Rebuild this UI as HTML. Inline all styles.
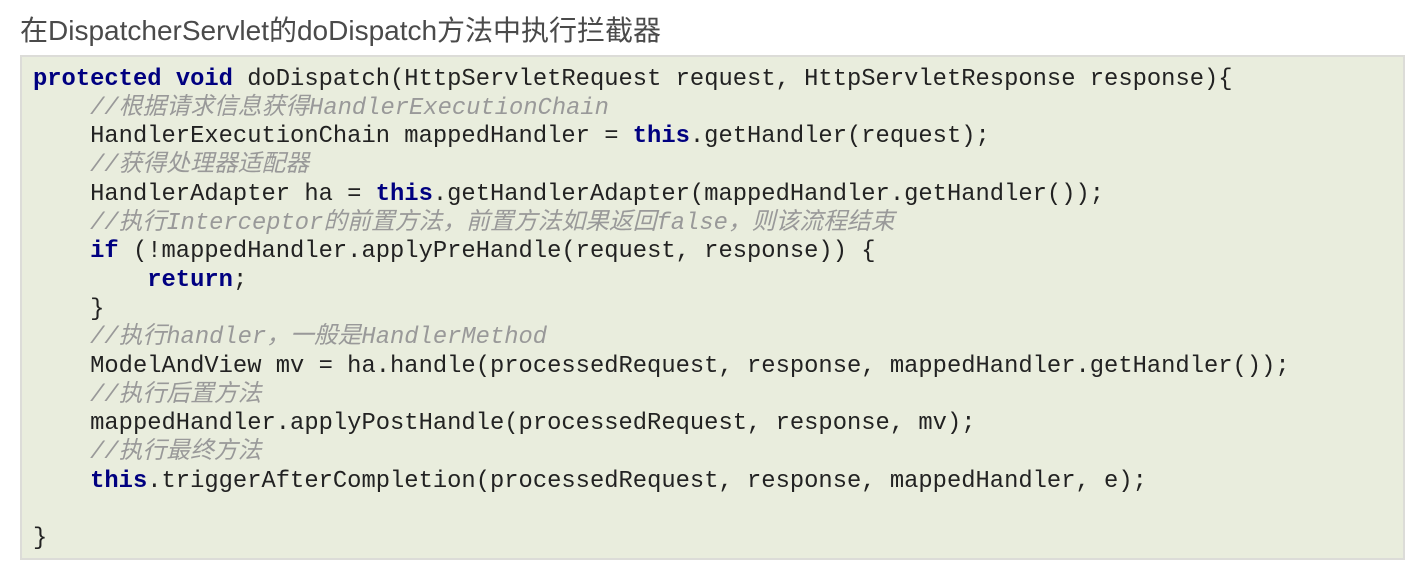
<!DOCTYPE html>
<html><head><meta charset="utf-8"><style>
html,body{margin:0;padding:0;background:#fff;width:1425px;height:573px;overflow:hidden}
h1{position:absolute;left:20px;top:12px;margin:0;font:28px "Liberation Sans","Noto Sans CJK SC",sans-serif;color:#4a4a4a;line-height:38px;font-weight:normal}
.box{position:absolute;left:20px;top:55px;width:1381px;height:501px;background:#e9eddd;border:2px solid #dcdcd8}
pre{margin:0;position:absolute;left:11px;top:9px;font:23.8px "Liberation Mono","Noto Sans CJK SC",monospace;line-height:28.7px;color:#222}
b{color:#000080;font-weight:bold}
i{color:#999;font-style:italic}
</style></head><body>
<h1>在DispatcherServlet的doDispatch方法中执行拦截器</h1>
<div class="box"><pre><b>protected</b> <b>void</b> doDispatch(HttpServletRequest request, HttpServletResponse response){
    <i>//根据请求信息获得HandlerExecutionChain</i>
    HandlerExecutionChain mappedHandler = <b>this</b>.getHandler(request);
    <i>//获得处理器适配器</i>
    HandlerAdapter ha = <b>this</b>.getHandlerAdapter(mappedHandler.getHandler());
    <i>//执行Interceptor的前置方法，前置方法如果返回false，则该流程结束</i>
    <b>if</b> (!mappedHandler.applyPreHandle(request, response)) {
        <b>return</b>;
    }
    <i>//执行handler，一般是HandlerMethod</i>
    ModelAndView mv = ha.handle(processedRequest, response, mappedHandler.getHandler());
    <i>//执行后置方法</i>
    mappedHandler.applyPostHandle(processedRequest, response, mv);
    <i>//执行最终方法</i>
    <b>this</b>.triggerAfterCompletion(processedRequest, response, mappedHandler, e);

}</pre></div>
</body></html>
